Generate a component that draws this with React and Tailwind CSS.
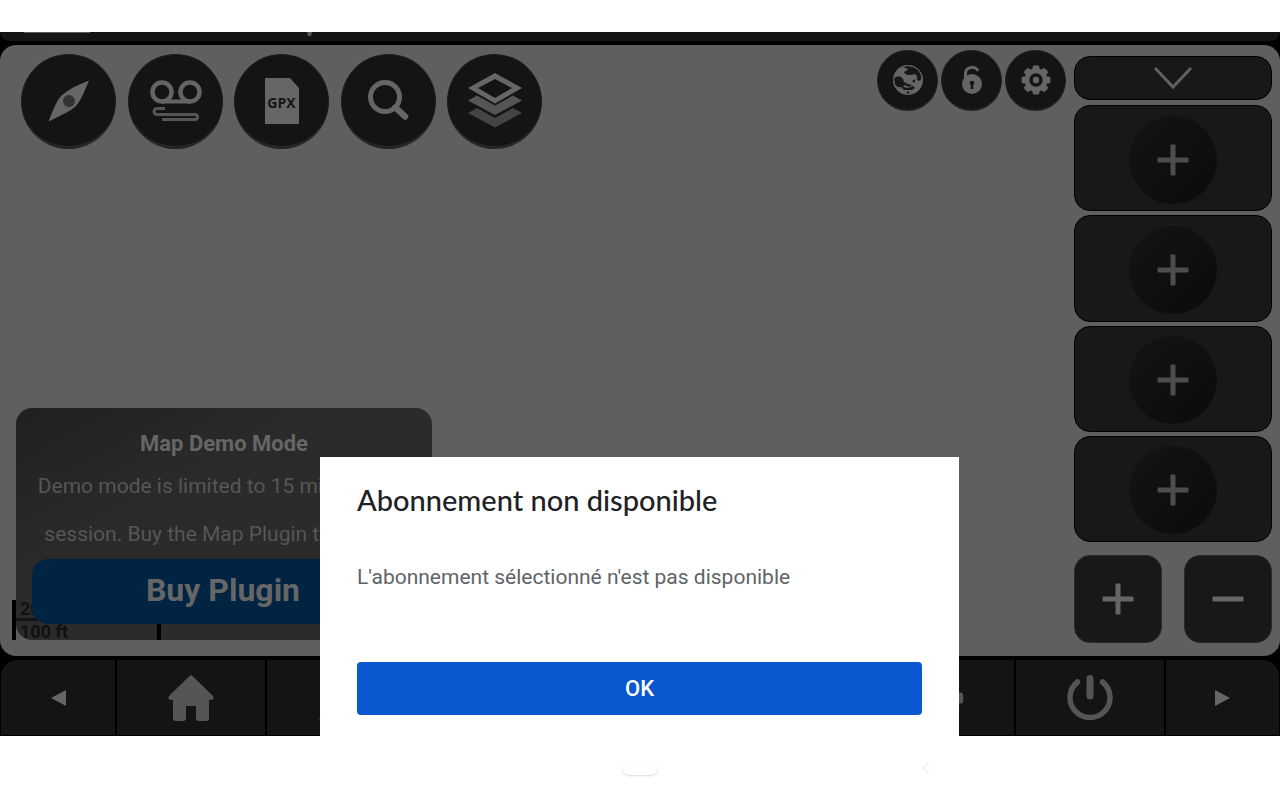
import React from "react";

function Tool({ label, children }) {
  return (
    <button aria-label={label} className="flex size-[95px] items-center justify-center rounded-full border border-b-[3px] border-[#1c1c1c] border-b-[#252525] bg-[#141414]">
      {children}
    </button>
  );
}

function Small({ label, children }) {
  return (
    <button aria-label={label} className="flex size-[61px] items-center justify-center rounded-full border border-b-2 border-[#1f1f1f] bg-[#141414]">
      {children}
    </button>
  );
}

function Plus({ color }) {
  return (
    <svg width="32" height="32" viewBox="0 0 32 32" fill={color}>
      <rect x="13.5" y="0.5" width="5" height="31" rx="1" />
      <rect x="0.5" y="13.5" width="31" height="5" rx="1" />
    </svg>
  );
}

const gearTeeth = [0, 45, 90, 135, 180, 225, 270, 315];

function Gear({ size, color }) {
  return (
    <svg width={size} height={size} viewBox="0 0 30 30" fill={color}>
      {gearTeeth.map((a) => (
        <rect key={a} x="11.5" y="0.5" width="7" height="7" rx="2" transform={`rotate(${a} 15 15)`} />
      ))}
      <circle cx="15" cy="15" r="11.5" />
      <circle cx="15" cy="15" r="5" stroke="#161616" strokeWidth="3.5" />
    </svg>
  );
}

function Slot({ n }) {
  return (
    <button aria-label={"Add widget " + n} className="flex w-full items-center justify-center rounded-2xl border border-black bg-[#181818] pt-[3px]">
      <span className="flex size-[88px] items-center justify-center rounded-full bg-linear-to-br from-[#141414] to-[#0b0b0b]">
        <Plus color="#4d4d4d" />
      </span>
    </button>
  );
}

export default function App() {
  return (
    <div className="flex min-h-screen flex-col bg-white pt-8 font-['Roboto','Liberation_Sans',sans-serif]">
      <div className="relative flex h-[704px] flex-col bg-black">
        <header className="flex h-[10px] items-start overflow-hidden rounded-b-2xl border-b border-black bg-[#141414] pl-6">
          <span className="h-px w-[66px] bg-[#5a5a5a]" />
          <svg className="ml-[217px]" width="5" height="5" viewBox="0 0 5 5"><path d="M0 0H5L4 4H1Z" fill="#5a5a5a" /></svg>
        </header>

        <main className="relative mt-[3px] flex h-[611px] justify-between overflow-hidden rounded-2xl bg-[#5f5f5f]">
          <div className="flex flex-col justify-between">
            <nav aria-label="Map tools" className="flex w-[542px] justify-between pt-[9px] pl-[21px]">
              <Tool label="Compass">
                <svg width="42" height="42" viewBox="0 0 42 42"><path d="M41 0.500C35 15 32 22 27 27C22 31 12 36 0.500 41.500C6 28 9 20 14 15C20 10 29 5 41 0.500Z" fill="#666" /><circle cx="21" cy="21" r="6" fill="#333" /></svg>
              </Tool>
              <Tool label="Record track">
                <svg width="54" height="44" viewBox="0 0 54 44" fill="none"><g strokeWidth="4.500" stroke="#646464"><circle cx="14" cy="13" r="9.500" /><circle cx="42" cy="13" r="9.500" /><path d="M14 22.500H42" strokeWidth="4" /></g><path d="M17 29.500H9a3 3 0 0 0 0 6H47a2.500 2.500 0 0 1 0 5H14" stroke="#555" strokeWidth="3" /></svg>
              </Tool>
              <Tool label="GPX files">
                <span className="relative flex h-[46px] w-[34px] items-center justify-center">
                  <svg className="absolute inset-0" width="34" height="46" viewBox="0 0 34 46"><path d="M1 0H25L34 10V45Q34 46 33 46H1Q0 46 0 45V1Q0 0 1 0Z" fill="#666" /></svg>
                  <span className="relative pt-1 font-['Open_Sans',sans-serif] text-sm leading-none font-bold text-[#141414]">GPX</span>
                </span>
              </Tool>
              <Tool label="Search">
                <svg width="42" height="42" viewBox="0 0 42 42" fill="none" stroke="#666"><circle cx="18" cy="17" r="14.500" strokeWidth="5" /><path d="M28.500 27.500L38 36.500" strokeWidth="6.500" strokeLinecap="round" /></svg>
              </Tool>
              <Tool label="Layers">
                <svg width="54" height="56" viewBox="0 0 54 56"><path d="M0 40L9 35L27 45L45 35L54 40L27 54.500Z" fill="#444" /><path d="M0 27.500L9 22.500L27 32.500L45 22.500L54 27.500L27 42Z" fill="#555" /><path fillRule="evenodd" d="M27 0L54 15L27 30.500L0 15ZM27 6L10 15L27 25L44 15Z" fill="#666" /></svg>
              </Tool>
            </nav>

            <section aria-labelledby="demo-title" className="relative mb-4 ml-4 flex h-[232px] w-[416px] flex-col items-center rounded-2xl bg-linear-to-br from-[#202020] via-[#2a2a2a] via-35% to-[#2c2c2c] px-4 pt-[18px] text-center">
              <h2 id="demo-title" className="text-[22px] leading-9 font-bold whitespace-nowrap text-[#666]">Map Demo Mode</h2>
              <p className="text-[21px] leading-12 whitespace-nowrap text-[#565656]">Demo mode is limited to 15 minutes per<br />session. Buy the Map Plugin to unlock.</p>
              <div className="absolute bottom-0 -left-1 h-10 w-[149px] border-x-4 border-black text-left text-lg leading-[18px] font-bold text-[#111]">
                <div className="border-b-[3px] border-[#151515] pl-1">20 m</div>
                <div className="pt-0.5 pl-1">100 ft</div>
              </div>
              <button className="relative mt-px h-[65px] w-full rounded-2xl bg-[#002442] pr-0.5 pb-1 text-[32px] leading-none font-bold text-[#666]">Buy Plugin</button>
            </section>
          </div>

          <div className="flex gap-2 pr-2">
            <div className="flex gap-[3px] pt-[5px]">
              <Small label="World map">
                <svg width="32" height="32" viewBox="0 0 32 32"><circle cx="16" cy="16" r="15" fill="#666" /><path d="M11 3Q18 0 25 5Q30 10 29 15Q28 18 25 16Q26 12 23 10Q20 11 17 11Q13 11 12 8Q15 7 16 5ZM2 14Q6 11 9 13Q12 15 12 18L16 20L20 21L17 23L13 21L11 23L16 24L21 22L23 24L20 26L12 26L9 23Q5 24 3 20ZM20 17L24 15L22 19Z" fill="#171717" /><circle cx="16" cy="28.500" r="1.200" fill="#171717" /><circle cx="16" cy="16" r="14.500" fill="none" stroke="#5d5d5d" /></svg>
              </Small>
              <Small label="Unlock">
                <svg width="22" height="30" viewBox="0 0 22 30"><path d="M4.500 14V9C4.500 1 15 0.500 17 6" fill="none" stroke="#666" strokeWidth="3" /><path d="M3 13Q11 6 19 13Z" fill="#666" /><circle cx="11" cy="19" r="10" fill="#666" /><circle cx="11" cy="18" r="2.300" fill="#161616" /><path d="M10 19H12L12.500 24H9.500Z" fill="#161616" /></svg>
              </Small>
              <Small label="Settings"><Gear size={30} color="#666" /></Small>
            </div>
            <aside className="flex w-[198px] flex-col pt-[11px]">
              <button aria-label="Collapse" className="mb-[5px] flex h-11 items-center justify-center rounded-2xl border border-black bg-[#181818]">
                <svg width="40" height="24" viewBox="0 0 40 24" fill="none" stroke="#606060" strokeWidth="3"><path d="M2 2L20 21L38 2" /></svg>
              </button>
              <div className="grid h-[437px] grid-rows-4 gap-1">
                <Slot n="1" /><Slot n="2" /><Slot n="3" /><Slot n="4" />
              </div>
              <div className="mt-[13px] flex justify-between">
                <button aria-label="Zoom in" className="flex size-[88px] items-center justify-center rounded-2xl border border-[#2a2a2a] bg-[#181818]"><Plus color="#666" /></button>
                <button aria-label="Zoom out" className="flex size-[88px] items-center justify-center rounded-2xl border border-[#2a2a2a] bg-[#181818]">
                  <svg width="32" height="6" viewBox="0 0 32 6"><rect x="0.500" y="0.500" width="31" height="5" rx="1" fill="#666" /></svg>
                </button>
              </div>
            </aside>
          </div>
        </main>

        <nav aria-label="App bar" className="mt-1 flex h-[75px] gap-[2px] overflow-hidden rounded-t-2xl px-px">
          <button aria-label="Previous" className="flex w-[114px] items-center justify-center rounded-tl-2xl bg-[#141414]">
            <svg width="15" height="16" viewBox="0 0 15 16"><path d="M0 8L15 0V16Z" fill="#666" /></svg>
          </button>
          <button aria-label="Home" className="flex flex-1 items-center justify-center bg-[#141414]">
            <svg width="48" height="48" viewBox="0 0 48 48"><path d="M22.500 2Q24 0.500 25.500 2L46 22Q48 25 44 26H42V44Q42 47 39 47H32Q29 47 29 44V32H19V44Q19 47 16 47H9Q6 47 6 44V26H4Q0 25 2 22Z" fill="#555" /></svg>
          </button>
          <span className="flex flex-1 items-center justify-center bg-[#141414]">
            <svg width="46" height="46" viewBox="0 0 46 46"><path d="M0 45L5 38V45Z" fill="#003c50" /></svg>
          </span>
          <span className="flex-1 bg-[#141414]" /><span className="flex-1 bg-[#141414]" /><span className="flex-1 bg-[#141414]" />
          <span className="flex flex-1 items-center justify-center bg-[#141414]">
            <Gear size={48} color="#555" />
          </span>
          <button aria-label="Power" className="flex flex-1 items-center justify-center bg-[#141414]">
            <svg width="46" height="46" viewBox="0 0 46 46" fill="none" stroke="#555" strokeLinecap="round"><path d="M10.500 7A20 20 0 1 0 35.500 7" strokeWidth="5.500" /><path d="M23 3.500V21" strokeWidth="7" /></svg>
          </button>
          <button aria-label="Next" className="flex w-[113px] items-center justify-center rounded-tr-2xl bg-[#141414]">
            <svg width="15" height="16" viewBox="0 0 15 16"><path d="M15 8L0 0V16Z" fill="#666" /></svg>
          </button>
        </nav>

        <div role="dialog" aria-labelledby="dialog-title" className="absolute bottom-0 left-1/4 flex h-[279px] w-[639px] flex-col bg-white px-[37px] pt-6 pb-[21px]">
          <h1 id="dialog-title" className="font-['Lato','Liberation_Sans',sans-serif] text-[29px] leading-[38px] font-medium text-[#202124]">Abonnement non disponible</h1>
          <p className="mt-[42px] text-[21px] leading-8 text-[#5f6368]">L'abonnement sélectionné n'est pas disponible</p>
          <button className="mt-auto h-[53px] rounded-sm bg-[#0b57d0] text-[22px] font-medium text-white">OK</button>
        </div>
      </div>

      <footer className="grid flex-1 grid-cols-2 items-center">
        <button aria-label="System home" className="h-[14px] w-9 translate-x-1/2 justify-self-end rounded-full bg-white shadow-[0_1px_2px_rgba(0,0,0,0.15)]" />
        <button aria-label="System back" className="ml-[280px] w-3">
          <svg width="12" height="14" viewBox="0 0 12 14" fill="none" stroke="#f5f5f5" strokeWidth="2"><path d="M9 2L3 7L9 12" /></svg>
        </button>
      </footer>
    </div>
  );
}
